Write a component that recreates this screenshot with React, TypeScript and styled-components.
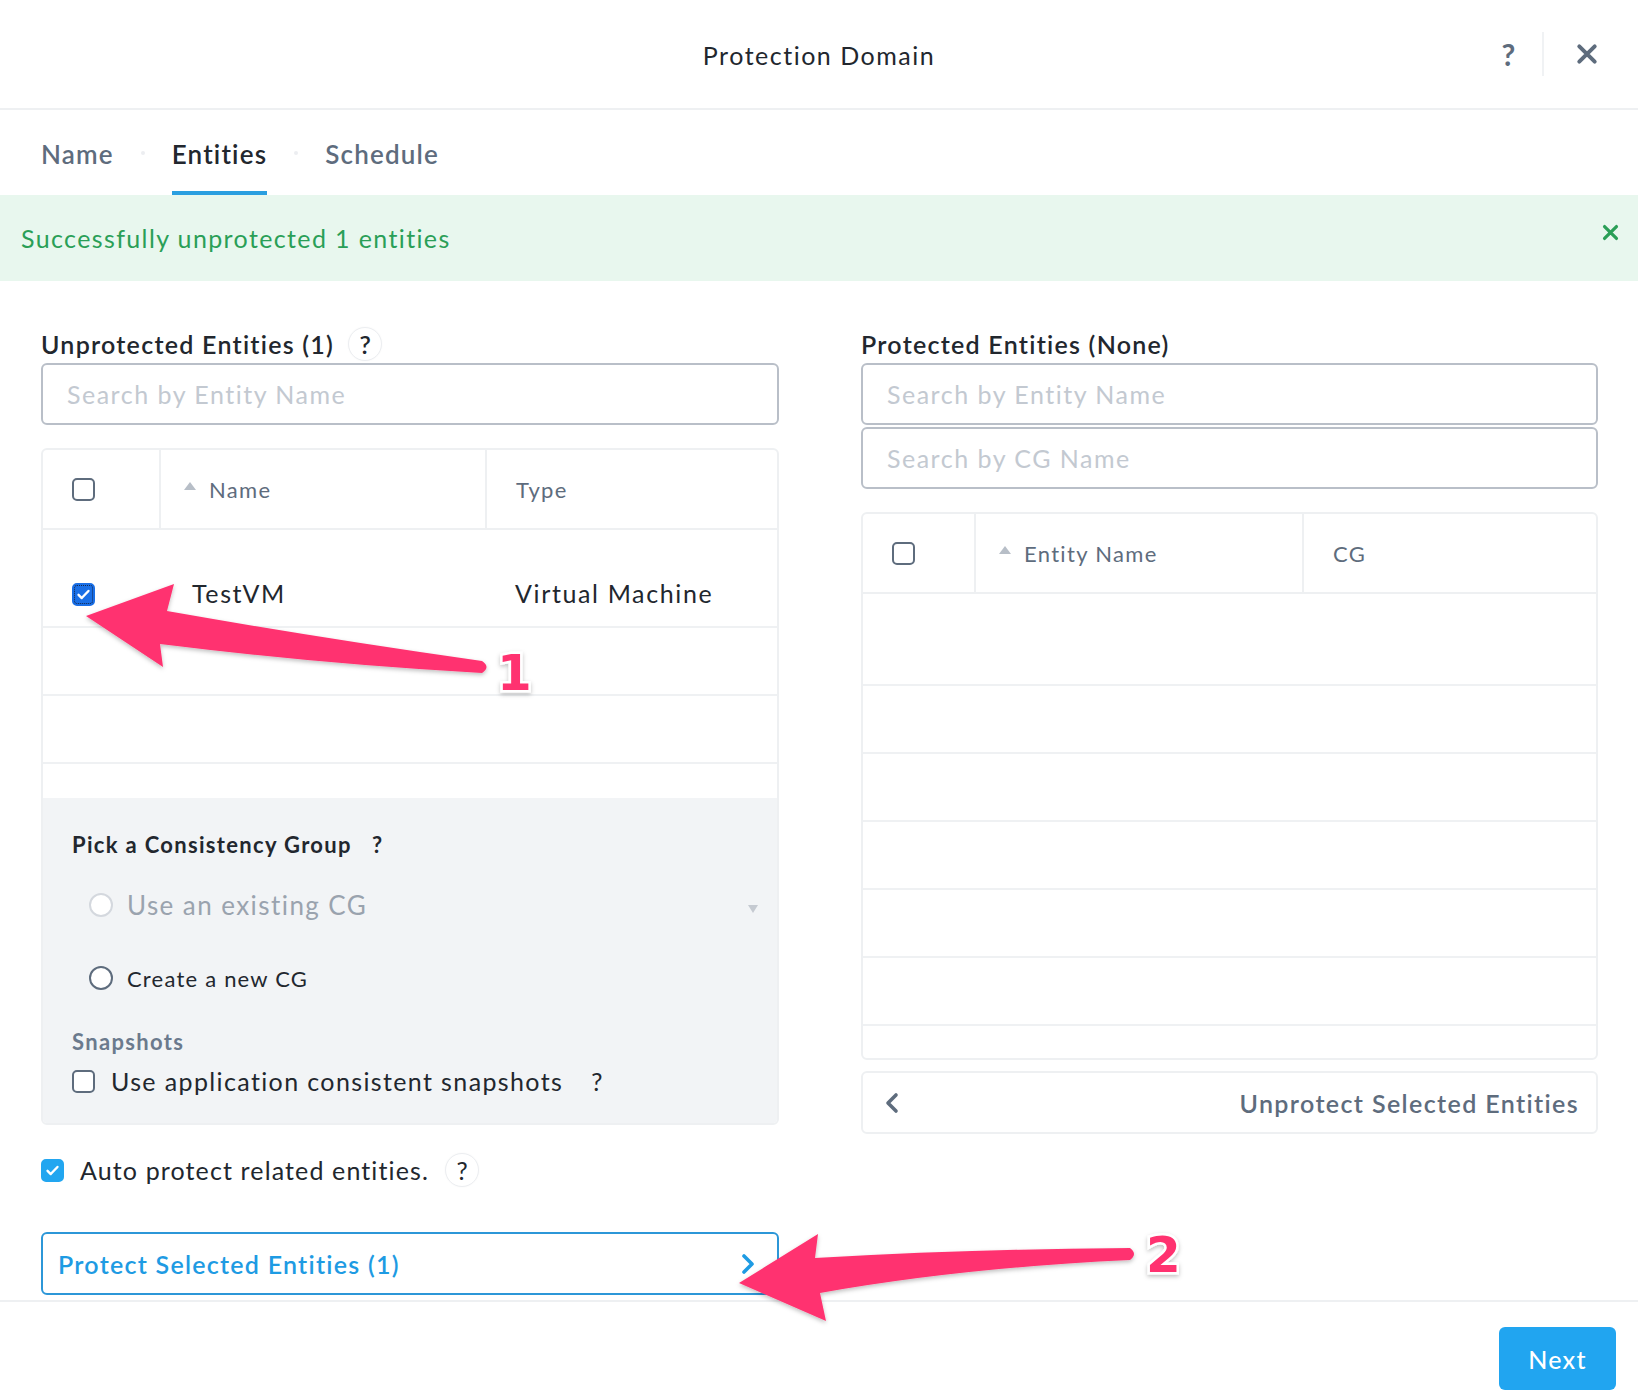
import React from 'react';
import styled, { createGlobalStyle } from 'styled-components';

const GlobalStyle = createGlobalStyle`
  html, body {
    margin: 0;
    padding: 0;
    background: #fff;
  }
  body {
    font-family: Lato, 'Open Sans', sans-serif;
    color: #22272e;
    letter-spacing: 0.05em;
  }
  * { box-sizing: border-box; }
`;

const Modal = styled.div`
  position: relative;
  width: 1638px;
  height: 1398px;
  display: flex;
  flex-direction: column;
  background: #fff;
  overflow: hidden;
`;

const Header = styled.header`
  height: 110px;
  flex-shrink: 0;
  border-bottom: 2px solid #eef0f2;
  display: grid;
  grid-template-columns: 1fr auto 1fr;
  align-items: center;
`;

const Title = styled.h1`
  grid-column: 2;
  margin: 2px 0 0;
  font-size: 25px;
  font-weight: 400;
  letter-spacing: 0.06em;
  color: #22272e;
`;

const HeaderActions = styled.div`
  grid-column: 3;
  justify-self: end;
  display: flex;
  align-items: center;
  height: 44px;
  padding-right: 40px;
`;

const HeaderHelp = styled.span`
  font-size: 30px;
  font-weight: 700;
  color: #5e6c7d;
  margin-right: 26px;
`;

const HeaderDivider = styled.span`
  width: 2px;
  height: 44px;
  background: #f0f2f4;
  margin-right: 32px;
`;

const TabBar = styled.nav`
  height: 85px;
  flex-shrink: 0;
  display: flex;
  align-items: stretch;
  padding-left: 41px;
`;

const Tab = styled.div<{ $active?: boolean }>`
  display: flex;
  align-items: center;
  padding-top: 6px;
  font-size: 26px;
  font-weight: 600;
  letter-spacing: 0.045em;
  color: ${(p) => (p.$active ? '#22272e' : '#5e6c7d')};
  border-bottom: 4px solid ${(p) => (p.$active ? '#2a9fe0' : 'transparent')};
`;

const TabDot = styled.span`
  align-self: center;
  width: 4px;
  height: 4px;
  border-radius: 50%;
  background: #eceef1;
  margin: 0 27px;
`;

const Banner = styled.div`
  height: 86px;
  flex-shrink: 0;
  background: #e8f7ee;
  display: flex;
  align-items: center;
  justify-content: space-between;
  padding: 0 19px 0 21px;
  font-size: 25px;
  letter-spacing: 0.055em;
  color: #2a9f57;
`;

const BannerClose = styled.span`
  display: flex;
  margin-top: -12px;
`;

const Body = styled.main`
  flex: 1;
  display: grid;
  grid-template-columns: 738px 737px;
  column-gap: 82px;
  padding: 46px 40px 0 41px;
  border-bottom: 2px solid #eef0f2;
`;

const Column = styled.section`
  display: flex;
  flex-direction: column;
`;

const SectionHead = styled.div`
  height: 34px;
  display: flex;
  align-items: center;
  gap: 14px;
  margin-bottom: 2px;
`;

const SectionTitle = styled.h2`
  margin: 0;
  font-size: 25px;
  font-weight: 600;
  letter-spacing: 0.05em;
  color: #22272e;
`;

const HelpCircle = styled.span<{ $light?: boolean }>`
  width: 34px;
  height: 34px;
  border-radius: 50%;
  border: 1px solid #eceef1;
  box-shadow: 0 0 2px rgba(0, 0, 0, 0.04);
  display: flex;
  align-items: center;
  justify-content: center;
  font-size: 25px;
  letter-spacing: 0;
  color: #22272e;
  font-weight: ${(p) => (p.$light ? 400 : 600)};
  background: #fff;
`;

const SearchInput = styled.input<{ $gap?: number }>`
  height: 62px;
  width: 100%;
  margin-top: ${(p) => p.$gap ?? 0}px;
  border: 2px solid #b9bfc8;
  border-radius: 6px;
  padding: 0 24px;
  font-family: Lato, sans-serif;
  font-size: 25px;
  letter-spacing: 0.06em;
  color: #22272e;
  outline: none;
  background: #fff;

  &::placeholder {
    color: #c3c9d1;
  }
`;

const TableCard = styled.div<{ $gap: number }>`
  margin-top: ${(p) => p.$gap}px;
  border: 2px solid #eef0f2;
  border-radius: 6px;
  overflow: hidden;
  background: #fff;
`;

const HeadRow = styled.div<{ $cols: string }>`
  display: grid;
  grid-template-columns: ${(p) => p.$cols};
  height: 80px;
  border-bottom: 2px solid #eef0f2;
`;

const HeadCell = styled.div<{ $pad: number }>`
  display: flex;
  align-items: center;
  padding-left: ${(p) => p.$pad}px;
  border-left: 2px solid #eef0f2;
  font-size: 22px;
  letter-spacing: 0.06em;
  color: #5e6c7d;

  &:first-child {
    border-left: none;
  }
`;

const SortArrow = styled.span`
  width: 0;
  height: 0;
  border-left: 6px solid transparent;
  border-right: 6px solid transparent;
  border-bottom: 8px solid #b7bec7;
  margin-right: 13px;
  margin-top: -6px;
`;

const TableBody = styled.div<{ $height: number; $top: number }>`
  height: ${(p) => p.$height}px;
  padding-top: ${(p) => p.$top}px;
  overflow: hidden;
`;

const Row = styled.div<{ $cols: string }>`
  display: grid;
  grid-template-columns: ${(p) => p.$cols};
  height: 68px;
  border-bottom: 2px solid #eff1f3;
  align-items: center;
  font-size: 25px;
  letter-spacing: 0.065em;
  color: #22272e;
`;

const Cell = styled.div<{ $pad: number }>`
  padding-left: ${(p) => p.$pad}px;
`;

const Box = styled.span<{ $checked?: boolean; $tone?: 'dark' | 'light' }>`
  width: 23px;
  height: 23px;
  flex-shrink: 0;
  border-radius: 5px;
  display: inline-flex;
  align-items: center;
  justify-content: center;
  border: 2px solid
    ${(p) => (p.$checked ? (p.$tone === 'dark' ? '#1a6fe6' : '#22a6f0') : '#5e6c7d')};
  background: ${(p) => (p.$checked ? (p.$tone === 'dark' ? '#1a6fe6' : '#22a6f0') : '#fff')};
  outline: ${(p) => (p.$checked && p.$tone === 'dark' ? '1px dotted #14264a' : 'none')};
  outline-offset: -3px;
`;

const CGPanel = styled.div`
  height: 325px;
  background: #f2f4f6;
  padding: 32px 19px 0 29px;
  display: flex;
  flex-direction: column;
`;

const PanelTitle = styled.div`
  height: 28px;
  display: flex;
  align-items: center;
  gap: 20px;
  font-size: 22px;
  font-weight: 700;
  letter-spacing: 0.06em;
  color: #22272e;
`;

const RadioRow = styled.label<{ $gap: number; $disabled?: boolean; $size: number }>`
  height: 40px;
  margin-top: ${(p) => p.$gap}px;
  padding-left: 17px;
  display: flex;
  align-items: center;
  gap: 14px;
  font-size: ${(p) => p.$size}px;
  letter-spacing: 0.055em;
  color: ${(p) => (p.$disabled ? '#9aa3ae' : '#22272e')};
`;

const Radio = styled.span<{ $disabled?: boolean }>`
  width: 24px;
  height: 24px;
  border-radius: 50%;
  border: 2px solid ${(p) => (p.$disabled ? '#d4d8de' : '#5e6c7d')};
  background: #fff;
`;

const DropArrow = styled.span`
  margin-left: auto;
  margin-top: 8px;
  width: 0;
  height: 0;
  border-left: 5px solid transparent;
  border-right: 5px solid transparent;
  border-top: 8px solid #c5cad1;
`;

const SubLabel = styled.div`
  margin-top: 30px;
  height: 26px;
  display: flex;
  align-items: center;
  font-size: 22px;
  font-weight: 700;
  letter-spacing: 0.06em;
  color: #6b7a8d;
`;

const CheckRow = styled.label<{ $gap: number; $spacing?: number }>`
  margin-top: ${(p) => p.$gap}px;
  height: 34px;
  display: flex;
  align-items: center;
  gap: 16px;
  font-size: 25px;
  letter-spacing: ${(p) => p.$spacing ?? 0.055}em;
  color: #22272e;
`;

const PlainHelp = styled.span`
  margin-left: 12px;
  font-size: 25px;
`;

const ProtectButton = styled.button`
  margin-top: 45px;
  height: 63px;
  width: 100%;
  border: 2px solid #2c97d8;
  border-radius: 6px;
  background: #fff;
  display: flex;
  align-items: center;
  justify-content: space-between;
  padding: 0 22px 0 15px;
  font-family: Lato, sans-serif;
  font-size: 25px;
  font-weight: 600;
  letter-spacing: 0.05em;
  color: #1e9be3;
`;

const UnprotectBar = styled.button`
  margin-top: 11px;
  height: 63px;
  width: 100%;
  border: 2px solid #eef0f2;
  border-radius: 6px;
  background: #fff;
  display: flex;
  align-items: center;
  justify-content: space-between;
  padding: 0 17px 0 22px;
  font-family: Lato, sans-serif;
  font-size: 25px;
  font-weight: 600;
  letter-spacing: 0.055em;
  color: #5e6c7d;
`;

const Footer = styled.footer`
  height: 96px;
  flex-shrink: 0;
  display: flex;
  justify-content: flex-end;
  align-items: flex-start;
  padding: 25px 22px 0 0;
`;

const NextButton = styled.button`
  width: 117px;
  height: 63px;
  border: none;
  border-radius: 6px;
  background: #21a5f0;
  color: #fff;
  font-family: Lato, sans-serif;
  font-size: 25px;
  font-weight: 500;
  letter-spacing: 0.05em;
`;

const Annotations = styled.svg`
  position: absolute;
  inset: 0;
  pointer-events: none;
`;

const Check = () => (
  <svg width="17" height="17" viewBox="0 0 24 24">
    <path d="M5 12.5l4.5 4.5L19 7" fill="none" stroke="#fff" strokeWidth="3.4" strokeLinecap="round" strokeLinejoin="round" />
  </svg>
);

const Cross = ({ color, size, width }: { color: string; size: number; width: number }) => (
  <svg width={size} height={size} viewBox="0 0 20 20">
    <path d="M3 3l14 14M17 3L3 17" stroke={color} strokeWidth={width} strokeLinecap="round" />
  </svg>
);

const Chevron = ({ dir, color }: { dir: 'left' | 'right'; color: string }) => (
  <svg width="14" height="22" viewBox="0 0 14 22">
    <path
      d={dir === 'right' ? 'M3 3l8 8-8 8' : 'M11 3l-8 8 8 8'}
      fill="none"
      stroke={color}
      strokeWidth="3.6"
      strokeLinecap="round"
      strokeLinejoin="round"
    />
  </svg>
);

const LEFT_COLS = '116px 326px 1fr';
const RIGHT_COLS = '111px 328px 1fr';

const App: React.FC = () => {
  return (
    <Modal>
      <GlobalStyle />
      <Header>
        <Title>Protection Domain</Title>
        <HeaderActions>
          <HeaderHelp>?</HeaderHelp>
          <HeaderDivider />
          <Cross color="#5e6c7d" size={22} width={3.6} />
        </HeaderActions>
      </Header>

      <TabBar>
        <Tab>Name</Tab>
        <TabDot />
        <Tab $active>Entities</Tab>
        <TabDot />
        <Tab>Schedule</Tab>
      </TabBar>

      <Banner>
        <span>Successfully unprotected 1 entities</span>
        <BannerClose>
          <Cross color="#2a9f57" size={17} width={3.8} />
        </BannerClose>
      </Banner>

      <Body>
        <Column>
          <SectionHead>
            <SectionTitle>Unprotected Entities (1)</SectionTitle>
            <HelpCircle>?</HelpCircle>
          </SectionHead>
          <SearchInput placeholder="Search by Entity Name" />

          <TableCard $gap={23}>
            <HeadRow $cols={LEFT_COLS}>
              <HeadCell $pad={29}>
                <Box />
              </HeadCell>
              <HeadCell $pad={23}>
                <SortArrow />
                Name
              </HeadCell>
              <HeadCell $pad={29}>Type</HeadCell>
            </HeadRow>
            <TableBody $height={268} $top={30}>
              <Row $cols={LEFT_COLS}>
                <Cell $pad={29}>
                  <Box $checked $tone="dark">
                    <Check />
                  </Box>
                </Cell>
                <Cell $pad={33}>TestVM</Cell>
                <Cell $pad={30}>Virtual Machine</Cell>
              </Row>
              <Row $cols={LEFT_COLS} />
              <Row $cols={LEFT_COLS} />
              <Row $cols={LEFT_COLS} />
            </TableBody>
            <CGPanel>
              <PanelTitle>
                Pick a Consistency Group
                <span>?</span>
              </PanelTitle>
              <RadioRow $gap={27} $disabled $size={26}>
                <Radio $disabled />
                Use an existing CG
                <DropArrow />
              </RadioRow>
              <RadioRow $gap={33} $size={22}>
                <Radio />
                Create a new CG
              </RadioRow>
              <SubLabel>Snapshots</SubLabel>
              <CheckRow $gap={10}>
                <Box />
                Use application consistent snapshots
                <PlainHelp>?</PlainHelp>
              </CheckRow>
            </CGPanel>
          </TableCard>

          <CheckRow $gap={28} $spacing={0.045}>
            <Box $checked>
              <Check />
            </Box>
            Auto protect related entities.
            <HelpCircle $light>?</HelpCircle>
          </CheckRow>

          <ProtectButton>
            Protect Selected Entities (1)
            <Chevron dir="right" color="#1e9be3" />
          </ProtectButton>
        </Column>

        <Column>
          <SectionHead>
            <SectionTitle>Protected Entities (None)</SectionTitle>
          </SectionHead>
          <SearchInput placeholder="Search by Entity Name" />
          <SearchInput placeholder="Search by CG Name" $gap={2} />

          <TableCard $gap={23}>
            <HeadRow $cols={RIGHT_COLS}>
              <HeadCell $pad={29}>
                <Box />
              </HeadCell>
              <HeadCell $pad={23}>
                <SortArrow />
                Entity Name
              </HeadCell>
              <HeadCell $pad={29}>CG</HeadCell>
            </HeadRow>
            <TableBody $height={464} $top={24}>
              {Array.from({ length: 7 }).map((_, i) => (
                <Row key={i} $cols={RIGHT_COLS} />
              ))}
            </TableBody>
          </TableCard>

          <UnprotectBar>
            <Chevron dir="left" color="#5e6c7d" />
            Unprotect Selected Entities
          </UnprotectBar>
        </Column>
      </Body>

      <Footer>
        <NextButton>Next</NextButton>
      </Footer>

      <Annotations width="1638" height="1398" viewBox="0 0 1638 1398">
        <defs>
          <filter id="shadow" x="-10%" y="-10%" width="120%" height="130%">
            <feDropShadow dx="0" dy="2" stdDeviation="2" floodColor="#000" floodOpacity="0.25" />
          </filter>
        </defs>
        <g fill="#ff3370" filter="url(#shadow)">
          <path d="M86,616 L174,584 L167,611 Q320,638 482,661 Q491,667 482,673 Q320,664 160,644 L163,667 Z" />
          <path d="M739,1283 L818,1234 L815,1258 Q970,1249 1130,1248 Q1138,1254 1130,1260 Q960,1268 820,1293 L826,1321 Z" />
        </g>
        <g
          fill="#ff3370"
          stroke="#fff"
          strokeWidth="5"
          fontFamily="'DejaVu Sans', sans-serif"
          fontWeight="700"
          fontSize="50"
          letterSpacing="0"
          style={{ paintOrder: 'stroke' }}
          filter="url(#shadow)"
        >
          <text x="497" y="690">1</text>
          <text x="1146" y="1272">2</text>
        </g>
      </Annotations>
    </Modal>
  );
};

export default App;
